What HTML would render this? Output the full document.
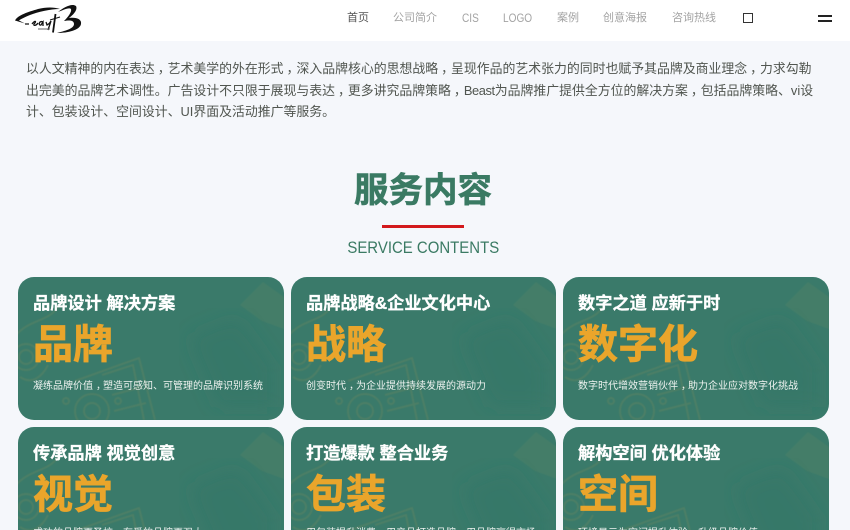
<!DOCTYPE html>
<html lang="zh"><head><meta charset="utf-8"><title>服务内容</title>
<style>
*{margin:0;padding:0;box-sizing:border-box}
html,body{width:850px;height:530px;overflow:hidden;background:#f5f7fb}
body{position:relative;font-family:"Liberation Sans","Noto Sans CJK SC",sans-serif}
.hd{position:absolute;left:0;top:0;width:850px;height:41px;background:#fff}
.nav{position:absolute;top:9.5px;font-size:11px;line-height:16px;color:#a3a3a3;white-space:nowrap}
.lat{font-size:12px;transform:scaleX(.84);transform-origin:0 50%}
.intro{position:absolute;left:26px;top:58px;width:810px;font-size:12.88px;line-height:21.7px;color:#50554f}
i{font-style:normal;position:relative;left:3px}
.h{position:absolute;left:0;width:850px;text-align:center}
.card{position:absolute;width:266px;height:143px;border-radius:16px;background:#3a7a6a;overflow:hidden;color:#fff}
.r2{height:103.5px;top:426.5px;border-radius:16px 16px 0 0}
.card svg{position:absolute;left:0;top:0}
.t,.b,.s{position:absolute;left:15px;white-space:nowrap}
.t{top:13.5px;font-size:17.2px;line-height:26px;font-weight:700;-webkit-text-stroke:.3px #fff}
.b{top:41.5px;font-size:40px;line-height:54px;font-weight:700;color:#eaa52b;-webkit-text-stroke:.7px #eaa52b}
.s{top:102.5px;font-size:10px;line-height:16px;color:#eef3f0}
.r2 .s{top:99.5px;height:4px;overflow:hidden}
</style></head><body>
<svg width="0" height="0" style="position:absolute"><defs>
<filter id="f1"><feGaussianBlur stdDeviation=".6"/></filter>
<filter id="f2"><feGaussianBlur stdDeviation="10"/></filter>
<symbol id="d" viewBox="0 0 266 143">
<g fill="none" stroke="#b59a4a" stroke-opacity=".15" stroke-width="2" filter="url(#f1)">
<circle cx="8" cy="80" r="13"/><circle cx="8" cy="80" r="7"/><path d="M-2 58C12 42 30 45 40 30M2 100C14 108 24 100 30 88"/>
<circle cx="74" cy="134" r="17"/><circle cx="74" cy="134" r="8"/><circle cx="48" cy="124" r="3"/><circle cx="100" cy="124" r="3"/>
<path d="M57 104L121 81L137 143M84 98L115 88L126 143M94 118L124 110M96 134L128 126"/>
</g>
<path d="M222 28L245 5L266 20V52L244 44Z" fill="#a89a55" fill-opacity=".09" filter="url(#f1)"/>
<path d="M170 60L220 40L256 90V130H200Z" fill="#2f7464" fill-opacity=".3" filter="url(#f2)"/>
</symbol></defs></svg>
<div class="hd"></div>
<svg style="position:absolute;left:0;top:0" width="100" height="40" viewBox="0 0 100 40">
<path d="M15 20.5C18 15 28 12 38 9C46 7 54 7 60 9C50 9 38 12 30 15C25 17 21 19 19 20.5L25 23.5L15 20.5Z" fill="#111"/>
<path d="M25 24H29M32 24C35 20 37 21 34 24C33 26 36 26 38 23M43 22C39 20 38 26 41 25L43 22V26M46 22L47 25C49 24 50 23 51 21L48 30" fill="none" stroke="#111" stroke-width="1.3"/>
<path d="M55.5 14L53 32.5" fill="none" stroke="#111" stroke-width="1.8"/>
<path d="M50 20L60 17" fill="none" stroke="#111" stroke-width="1"/>
<path d="M58 12C64 7 72 3 76 6C78 10 73 15 69 18C76 17 82 19 81 24C80 30 68 33 57 33C64 31 74 29 74 24C74 20 69 20 64 21C68 17 72 12 71 9C69 7 63 10 58 12Z" fill="#111"/>
<path d="M38 29H50" stroke="#666" stroke-width="1"/>
</svg>
<div class="nav" style="left:347px;color:#555">首页</div>
<div class="nav" style="left:393px">公司简介</div>
<div class="nav lat" style="left:462px">CIS</div>
<div class="nav lat" style="left:503px">LOGO</div>
<div class="nav" style="left:557px">案例</div>
<div class="nav" style="left:603px">创意海报</div>
<div class="nav" style="left:672px">咨询热线</div>
<div style="position:absolute;left:743px;top:13px;width:10px;height:10px;border:1.5px solid #333"></div>
<div style="position:absolute;left:818px;top:15px;width:14px;height:2px;background:#222"></div>
<div style="position:absolute;left:818px;top:19.5px;width:14px;height:2px;background:#222"></div>
<p class="intro">以人文精神的内在表达<i>，</i>艺术美学的外在形式<i>，</i>深入品牌核心的思想战略<i>，</i>呈现作品的艺术张力的同时也赋予其品牌及商业理念<i>，</i>力求勾勒<br>出完美的品牌艺术调性。广告设计不只限于展现与表达<i>，</i>更多讲究品牌策略<i>，</i><span style="letter-spacing:-.4px">Beast</span>为品牌推广提供全方位的解决方案<i>，</i>包括品牌策略、vi设<br>计、包装设计、空间设计、UI界面及活动推广等服务。</p>
<div class="h" style="top:166px;left:-2px;font-size:34.5px;line-height:50px;font-weight:700;color:#3a7a63;-webkit-text-stroke:.6px #3a7a63">服务内容</div>
<div style="position:absolute;left:382px;top:225px;width:82px;height:3px;background:#d3191c"></div>
<div class="h" style="top:237px;left:-2px;font-size:17px;line-height:22px;color:#3a7a63"><span style="display:inline-block;transform:scaleX(.88)">SERVICE CONTENTS</span></div>

<div class="card" style="left:18px;top:276.5px"><svg width="266" height="143"><use href="#d" width="266" height="143"/></svg><div class="t">品牌设计 解决方案</div><div class="b">品牌</div><div class="s">凝练品牌价值<i>，</i>塑造可感知、可管理的品牌识别系统</div></div>
<div class="card" style="left:291px;top:276.5px;width:265px"><svg width="265" height="143"><use href="#d" width="266" height="143"/></svg><div class="t">品牌战略&amp;企业文化中心</div><div class="b">战略</div><div class="s">创变时代<i>，</i>为企业提供持续发展的源动力</div></div>
<div class="card" style="left:563px;top:276.5px"><svg width="266" height="143"><use href="#d" width="266" height="143"/></svg><div class="t">数字之道 应新于时</div><div class="b">数字化</div><div class="s">数字时代增效营销伙伴<i>，</i>助力企业应对数字化挑战</div></div>
<div class="card r2" style="left:18px"><svg width="266" height="103"><use href="#d" width="266" height="143"/></svg><div class="t">传承品牌 视觉创意</div><div class="b">视觉</div><div class="s">成功的品牌更圣校<i>，</i>有爱的品牌更强大</div></div>
<div class="card r2" style="left:291px;width:265px"><svg width="265" height="103"><use href="#d" width="266" height="143"/></svg><div class="t">打造爆款 整合业务</div><div class="b">包装</div><div class="s">用包装提升消费<i>，</i>用产品打造品牌<i>，</i>用品牌赢得市场</div></div>
<div class="card r2" style="left:563px"><svg width="266" height="103"><use href="#d" width="266" height="143"/></svg><div class="t">解构空间 优化体验</div><div class="b">空间</div><div class="s">环境显示为空间提升体验<i>，</i>升级品牌价值</div></div>
</body></html>
